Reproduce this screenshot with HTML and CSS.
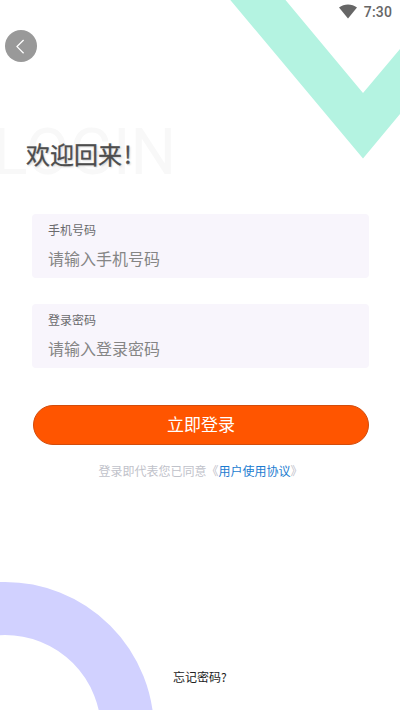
FILE: index.html
```html
<!DOCTYPE html>
<html lang="zh-CN">
<head>
<meta charset="utf-8">
<title>登录</title>
<link rel="stylesheet" href="styles.css">
</head>
<body>
<main class="screen">
  <svg class="decoration" viewBox="0 0 400 710" aria-hidden="true">
    <path fill="#b4f3e1" d="M230.300 0H285.500L363 93L400 49V114L363 158.500Z"/>
    <circle cx="5" cy="731" r="122.500" fill="none" stroke="#d1d1ff" stroke-width="53"/>
  </svg>
  <header class="status">
    <svg class="wifi" viewBox="0 0 18 15" aria-hidden="true"><path fill="#666" d="M0 3.500C5.200-.6 12.800-.6 18 3.500L9 14.500Z"/></svg>
    <span>7:30</span>
  </header>
  <button class="back" aria-label="返回">
    <svg viewBox="0 0 32 32" aria-hidden="true"><path d="M18.600 10L12 16.600L18.600 23.300" fill="none" stroke="#fff" stroke-width="1.300"/></svg>
  </button>
  <div class="heading">
    <span class="watermark">LOGIN</span>
    <h1>欢迎回来<span class="mark">!</span></h1>
  </div>
  <form class="form">
    <label class="field"><span class="label">手机号码</span><input type="tel" placeholder="请输入手机号码"></label>
    <label class="field"><span class="label">登录密码</span><input type="password" placeholder="请输入登录密码"></label>
    <button class="submit" type="button">立即登录</button>
  </form>
  <p class="agreement">登录即代表您已同意<span>《<a>用户使用协议</a>》</span></p>
  <footer class="forgot">忘记密码?</footer>
</main>
</body>
</html>
```
FILE: styles.css
```css
* { box-sizing: border-box; }
body { margin: 0; background: #fff; font-family: "Noto Sans CJK SC", sans-serif; }
.screen { position: relative; display: flex; flex-direction: column; width: 400px; height: 710px; overflow: hidden; }
.decoration { position: absolute; inset: 0; width: 400px; height: 710px; pointer-events: none; }
.status { position: relative; display: flex; justify-content: flex-end; align-items: center; gap: 7px; height: 24px; padding-right: 8px; color: #666; font-family: Roboto, sans-serif; font-size: 14px; font-weight: 500; letter-spacing: .15px; }
.wifi { width: 18px; height: 15px; margin-top: -1px; }
.back { width: 32px; height: 32px; margin: 6px 0 0 5px; padding: 0; border: 0; border-radius: 50%; background: #999; }
.back svg { display: block; width: 32px; height: 32px; }
.heading { position: relative; height: 64px; margin-top: 58px; padding: 16px 0 0 26px; }
.watermark { position: absolute; left: -7px; top: 1px; color: #f8f8f8; font-family: Roboto, sans-serif; font-size: 64px; line-height: 64px; }
h1 { position: relative; margin: 0; color: #4d4d4d; font-size: 24px; font-weight: 400; line-height: 36px; -webkit-text-stroke: .3px #4d4d4d; text-shadow: 1px 1px 2px #ccc; }
.mark { margin-left: 2px; }
.form { display: flex; flex-direction: column; gap: 26px; margin: 30px 31px 0 32px; }
.field { display: flex; flex-direction: column; height: 64px; padding: 7px 16px; border-radius: 4px; background: #f8f5fc; }
.label { color: #6a6a6d; font-size: 12px; line-height: 18px; }
.field input { width: 100%; height: 28px; margin-top: 6px; padding: 0; border: 0; background: transparent; color: #555; font: inherit; font-size: 16px; }
.field input::placeholder { color: #858585; opacity: 1; }
.submit { height: 40px; margin: 11px 0 0 1px; padding: 0 0 3px; border: 1px solid #d24c0b; border-radius: 20px; background: #ff5500; color: #fff; font: inherit; font-size: 17px; line-height: 35px; }
.agreement { margin: 17px 0 0; padding-left: 98.5px; color: #bfc2ca; font-size: 12px; line-height: 18px; white-space: nowrap; }
.agreement a { color: #1c7cd0; }
.forgot { margin: auto 0 24px 173px; color: #222; font-size: 12px; line-height: 18px; }
```
